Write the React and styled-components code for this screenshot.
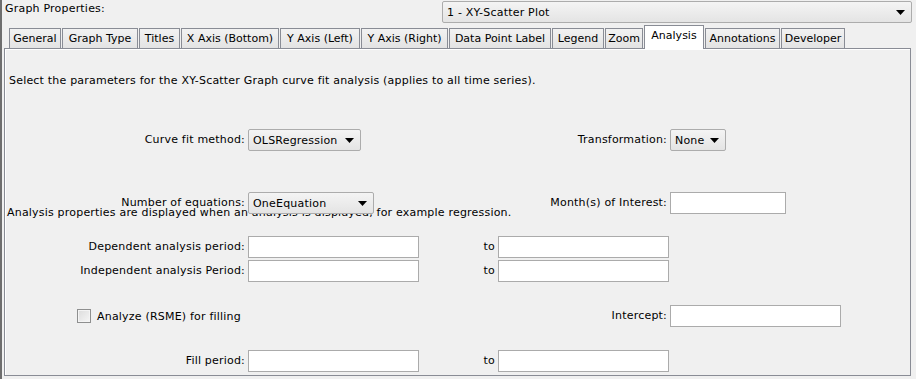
import styled, { createGlobalStyle } from "styled-components";

const GlobalStyle = createGlobalStyle`
  html, body {
    margin: 0;
    padding: 0;
    background: #f0f0f0;
  }
  body {
    font-family: "DejaVu Sans", "Liberation Sans", sans-serif;
    font-size: 11px;
    letter-spacing: 0.2px;
    color: #000;
  }
`;

const Frame = styled.div`
  width: 916px;
  height: 379px;
  box-sizing: border-box;
  border-left: 2px solid #6e6e6e;
  padding: 1px 4px 0 0;
  display: flex;
  flex-direction: column;
`;

const Header = styled.div`
  display: flex;
  align-items: flex-start;
  justify-content: space-between;
  height: 22px;
`;

const HeaderLabel = styled.span`
  padding-left: 3px;
  line-height: 16px;
`;

const ComboBox = styled.div`
  position: relative;
  z-index: 1;
  box-sizing: border-box;
  width: ${({ $w }) => $w}px;
  height: 22px;
  display: flex;
  align-items: center;
  justify-content: space-between;
  padding: 0 6px 0 4px;
  border: 1px solid #acacac;
  border-radius: 2px;
  background: linear-gradient(#f4f4f4, #e4e4e4);
  white-space: nowrap;
`;

const TabStrip = styled.div`
  display: flex;
  align-items: flex-end;
  gap: 1px;
  height: 23px;
  margin-top: 2px;
  padding-left: 7px;
`;

const Tab = styled.div`
  position: relative;
  box-sizing: border-box;
  width: ${({ $w }) => $w}px;
  height: ${({ $active }) => ($active ? "24px" : "20px")};
  margin-bottom: ${({ $active }) => ($active ? "-1px" : "0")};
  z-index: ${({ $active }) => ($active ? 2 : 0)};
  display: flex;
  justify-content: center;
  padding-top: 3px;
  border: 1px solid #898c95;
  border-bottom: none;
  background: ${({ $active }) =>
    $active ? "#fff" : "linear-gradient(#f2f2f2, #e3e3e3)"};
  letter-spacing: 0;
  white-space: nowrap;
`;

const Panel = styled.div`
  position: relative;
  z-index: 1;
  margin-left: 2px;
  width: 907px;
  height: 328px;
  box-sizing: border-box;
  border: 1px solid #898c95;
  box-shadow: inset 1px 1px 0 #fff;
  background: #f0f0f0;
  display: flex;
  flex-direction: column;
`;

const Description = styled.div`
  margin-top: 25px;
  padding-left: 4px;
  line-height: 14px;
  white-space: nowrap;
`;

const FormRow = styled.div`
  display: grid;
  grid-template-columns: 243px 171px 79px 172px 1fr;
  height: 22px;
  margin-top: ${({ $top }) => $top}px;
`;

const Label = styled.span`
  grid-column: ${({ $col }) => $col};
  grid-row: 1;
  align-self: center;
  justify-self: end;
  padding-right: 3px;
  white-space: nowrap;
  line-height: 14px;
`;

const Field = styled.div`
  grid-column: ${({ $col }) => $col};
  grid-row: 1;
  position: relative;
  z-index: 1;
  box-sizing: border-box;
  width: ${({ $w }) => $w}px;
  height: 22px;
  background: #fff;
  border: 1px solid #ababab;
`;

const Slot = styled.div`
  grid-column: ${({ $col }) => $col};
  grid-row: 1;
`;

const Note = styled.div`
  grid-column: 1 / -1;
  grid-row: 1;
  align-self: end;
  margin-bottom: -6px;
  padding-left: 2px;
  line-height: 14px;
  white-space: nowrap;
`;

const CheckCell = styled.label`
  grid-column: 1 / 3;
  grid-row: 1;
  display: flex;
  align-items: center;
  gap: 6px;
  padding-left: 72px;
`;

const CheckBox = styled.span`
  box-sizing: border-box;
  width: 14px;
  height: 14px;
  border: 1px solid #8e8f8f;
  background: linear-gradient(135deg, #dcdcdc, #f6f6f6);
  box-shadow: inset 0 0 0 1px #f4f4f4;
`;

const Arrow = () => (
  <svg width="9" height="5" viewBox="0 0 9 5">
    <polygon points="0,0 9,0 4.5,5" fill="#000" />
  </svg>
);

const Combo = ({ w, value }) => (
  <ComboBox $w={w}>
    <span>{value}</span>
    <Arrow />
  </ComboBox>
);

const TABS = [
  { label: "General", w: 52 },
  { label: "Graph Type", w: 76 },
  { label: "Titles", w: 41 },
  { label: "X Axis (Bottom)", w: 98 },
  { label: "Y Axis (Left)", w: 80 },
  { label: "Y Axis (Right)", w: 87 },
  { label: "Data Point Label", w: 102 },
  { label: "Legend", w: 52 },
  { label: "Zoom", w: 38 },
  { label: "Analysis", w: 60, active: true },
  { label: "Annotations", w: 75 },
  { label: "Developer", w: 64 },
];

export default function App() {
  return (
    <>
      <GlobalStyle />
      <Frame>
        <Header>
          <HeaderLabel>Graph Properties:</HeaderLabel>
          <Combo w={470} value="1 - XY-Scatter Plot" />
        </Header>

        <TabStrip>
          {TABS.map((t) => (
            <Tab key={t.label} $w={t.w} $active={t.active}>
              {t.label}
            </Tab>
          ))}
        </TabStrip>

        <Panel>
          <Description>
            Select the parameters for the XY-Scatter Graph curve fit analysis (applies to all time series).
          </Description>

          <FormRow $top={41}>
            <Label $col={1}>Curve fit method:</Label>
            <Slot $col={2}>
              <Combo w={113} value="OLSRegression" />
            </Slot>
            <Label $col={4}>Transformation:</Label>
            <Slot $col={5}>
              <Combo w={56} value="None" />
            </Slot>
          </FormRow>

          <FormRow $top={41}>
            <Note>
              Analysis properties are displayed when an analysis is displayed, for example regression.
            </Note>
            <Label $col={1}>Number of equations:</Label>
            <Slot $col={2}>
              <Combo w={126} value="OneEquation" />
            </Slot>
            <Label $col={4}>Month(s) of Interest:</Label>
            <Field $col={5} $w={116} />
          </FormRow>

          <FormRow $top={22}>
            <Label $col={1}>Dependent analysis period:</Label>
            <Field $col={2} $w={171} />
            <Label $col={3}>to</Label>
            <Field $col={4} $w={171} />
          </FormRow>

          <FormRow $top={2}>
            <Label $col={1}>Independent analysis Period:</Label>
            <Field $col={2} $w={171} />
            <Label $col={3}>to</Label>
            <Field $col={4} $w={171} />
          </FormRow>

          <FormRow $top={23}>
            <CheckCell>
              <CheckBox />
              <span>Analyze (RSME) for filling</span>
            </CheckCell>
            <Label $col={4}>Intercept:</Label>
            <Field $col={5} $w={171} />
          </FormRow>

          <FormRow $top={23}>
            <Label $col={1}>Fill period:</Label>
            <Field $col={2} $w={171} />
            <Label $col={3}>to</Label>
            <Field $col={4} $w={171} />
          </FormRow>
        </Panel>
      </Frame>
    </>
  );
}
